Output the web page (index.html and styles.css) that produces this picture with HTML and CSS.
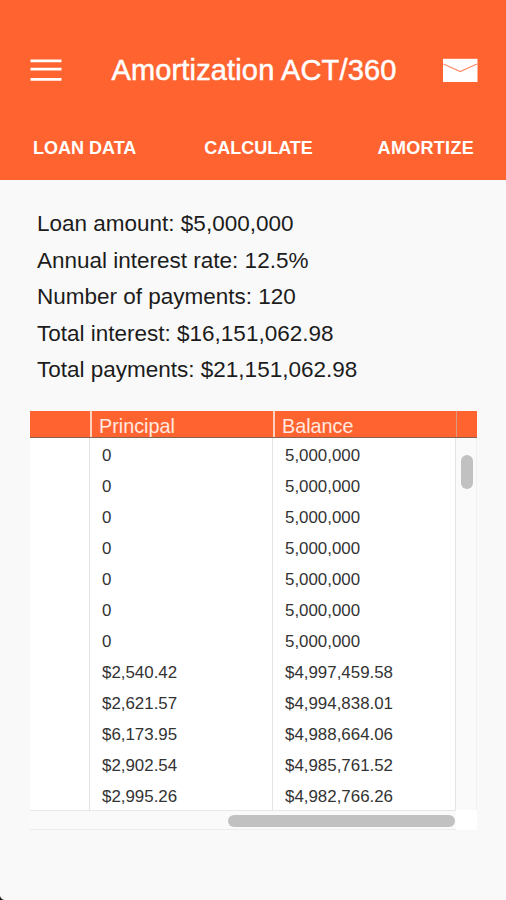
FILE: index.html
```
<!DOCTYPE html>
<html lang="en">

<head>
    <meta charset="UTF-8">
    <meta name="viewport" content="width=device-width, initial-scale=1.0">
    <title>Amortization ACT/360</title>
    <link rel="stylesheet" href="styles.css">
</head>

<body>
    <div class="header">
        <div class="title-bar">
            <svg class="menu-icon" width="32" height="24" viewBox="0 0 32 24">
                <path d="M0.5 2.8H31.5M0.5 11.2H31.5M0.5 21.3H31.5" stroke="#fff" stroke-width="2.8" />
            </svg>
            <div class="title">Amortization ACT/360</div>
            <svg class="mail-icon" width="35" height="24" viewBox="0 0 35 24">
                <rect y="0.8" width="34.5" height="23.2" fill="#fff" />
                <path d="M0.5 6L17.3 13.5L34 6" fill="none" stroke="#ff8a66" stroke-width="1.2" />
            </svg>
        </div>
        <div class="tabs">
            <div class="tab">LOAN DATA</div>
            <div class="tab calculate">CALCULATE</div>
            <div class="tab amortize">AMORTIZE</div>
        </div>
    </div>

    <div class="summary">
        <div>Loan amount: $5,000,000</div>
        <div>Annual interest rate: 12.5%</div>
        <div>Number of payments: 120</div>
        <div>Total interest: $16,151,062.98</div>
        <div>Total payments: $21,151,062.98</div>
    </div>

    <div class="schedule">
        <div class="schedule-head">
            <div></div>
            <div>Principal</div>
            <div>Balance</div>
            <div></div>
        </div>
        <div class="schedule-body">
            <div class="column"></div>
            <div class="column">
                <div>0</div>
                <div>0</div>
                <div>0</div>
                <div>0</div>
                <div>0</div>
                <div>0</div>
                <div>0</div>
                <div>$2,540.42</div>
                <div>$2,621.57</div>
                <div>$6,173.95</div>
                <div>$2,902.54</div>
                <div>$2,995.26</div>
            </div>
            <div class="column">
                <div>5,000,000</div>
                <div>5,000,000</div>
                <div>5,000,000</div>
                <div>5,000,000</div>
                <div>5,000,000</div>
                <div>5,000,000</div>
                <div>5,000,000</div>
                <div>$4,997,459.58</div>
                <div>$4,994,838.01</div>
                <div>$4,988,664.06</div>
                <div>$4,985,761.52</div>
                <div>$4,982,766.26</div>
            </div>
            <div class="scroll-y">
                <div class="thumb-y"></div>
            </div>
        </div>
        <div class="schedule-foot">
            <div class="scroll-x">
                <div class="thumb-x"></div>
            </div>
            <div class="corner"></div>
        </div>
    </div>

    <div class="screen-corner"></div>
</body>

</html>
```
FILE: styles.css
```
* {
    box-sizing: border-box;
}

body {
    margin: 0;
    height: 900px;
    overflow: hidden;
    position: relative;
    background-color: #f9f9f9;
    font-family: "Liberation Sans", Arial, sans-serif;
    color: #1c1c1c;
}

.header {
    height: 180px;
    padding-top: 50px;
    background-color: #ff6430;
    color: white;
}

.title-bar {
    display: flex;
    align-items: center;
    justify-content: space-between;
    height: 40px;
    padding: 0 28px 0 30px;
}

.title {
    margin-left: 3px;
    font-size: 29px;
    line-height: 40px;
    letter-spacing: 0.15px;
    white-space: nowrap;
    -webkit-text-stroke: 0.5px white;
}

.tabs {
    display: flex;
    justify-content: space-between;
    padding: 47px 32px 0 33px;
}

.tab {
    font-size: 18px;
    line-height: 22px;
    font-weight: 700;
}

.calculate {
    margin-left: 3px;
}

.amortize {
    letter-spacing: 0.3px;
}

.summary {
    height: 231px;
    padding: 26px 0 0 37px;
    font-size: 22.5px;
    line-height: 36.5px;
    white-space: nowrap;
}

.schedule {
    width: 447px;
    margin-left: 30px;
}

.schedule-head,
.schedule-body {
    display: grid;
    grid-template-columns: 60px 183px 183px 21px;
}

.schedule-head {
    height: 27px;
    grid-template-rows: 26px;
    background-color: #ff6430;
    border-bottom: 1px solid #85604f;
    color: #ffe9e0;
    font-size: 19.8px;
    line-height: 31px;
}

.schedule-head div + div {
    border-left: 2px solid #ffd0bd;
    padding-left: 7px;
}

.schedule-head div:last-child {
    border-left: 1px solid #dc9a80;
}

.schedule-body {
    height: 372px;
    background-color: white;
}

.column {
    padding: 2px 0 0 11px;
    border-right: 1px solid #e4e4e4;
    color: #333;
    font-size: 16.9px;
    line-height: 31px;
}

.column + .column {
    padding-left: 12px;
}

.scroll-y {
    padding: 17px 0 0 5px;
    border-right: 1px solid #f0f0f0;
    background-color: #fafafa;
}

.thumb-y {
    width: 12px;
    height: 34px;
    border-radius: 6px;
    background-color: #c1c1c1;
}

.schedule-foot {
    display: flex;
    height: 20px;
}

.scroll-x {
    flex: 1;
    padding-top: 4px;
    border-top: 1px solid #e8e8e8;
    border-bottom: 1px solid #ececec;
    background-color: #fafafa;
}

.thumb-x {
    width: 227px;
    height: 12px;
    margin-left: 198px;
    border-radius: 6px;
    background-color: #c1c1c1;
}

.corner {
    width: 21px;
    background-color: white;
}

/* rounded edge of the device screen */
.screen-corner {
    position: absolute;
    left: 0;
    bottom: 0;
    width: 5px;
    height: 5px;
    background: radial-gradient(circle at 100% 0, transparent 4.5px, #111 5.5px);
}
```
